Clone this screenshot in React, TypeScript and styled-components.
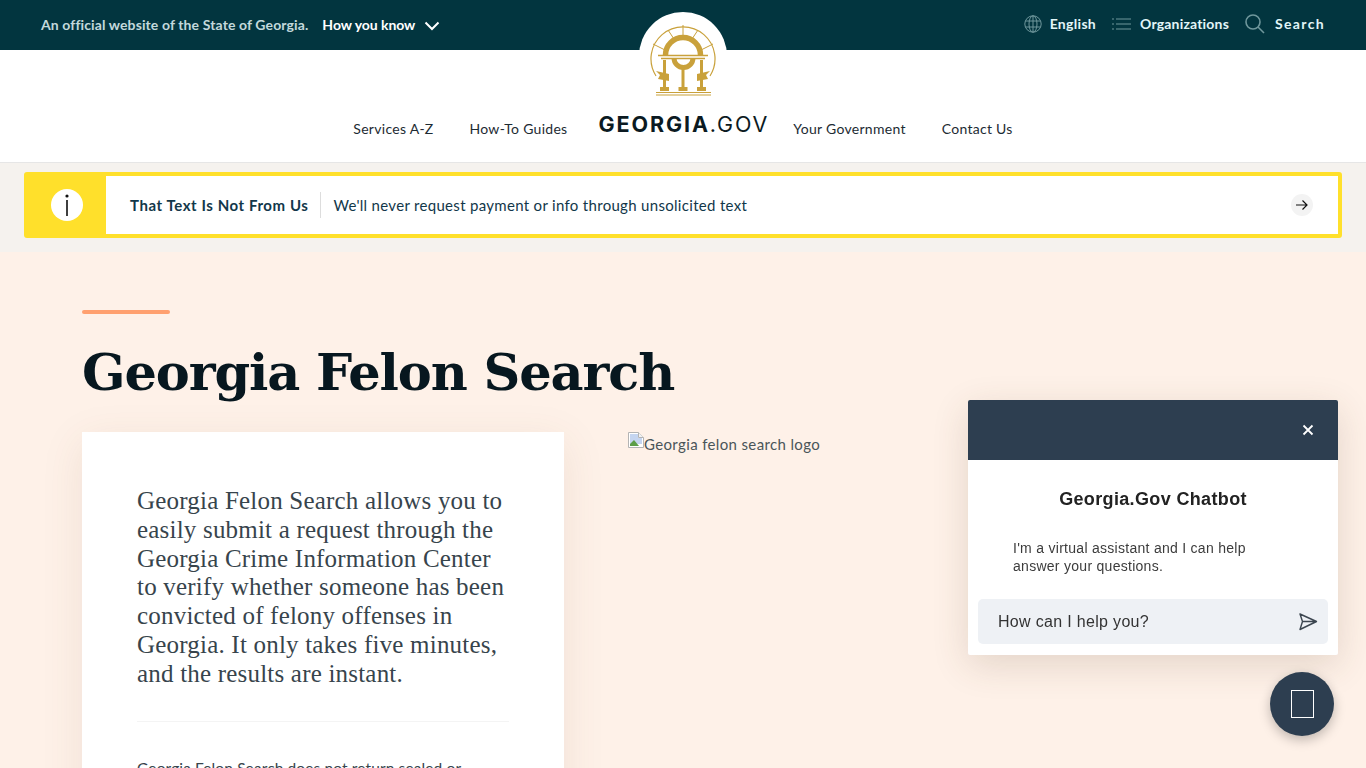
import * as React from 'react';
import styled, { createGlobalStyle } from 'styled-components';

const GlobalStyle = createGlobalStyle`
  html, body {
    margin: 0;
    padding: 0;
    height: 768px;
    overflow: hidden;
    background: #fef1e8;
    font-family: Lato, "Open Sans", sans-serif;
    color: #02353f;
  }
  * { box-sizing: border-box; }
`;

const TopBar = styled.div`
  height: 50px;
  background: #02353f;
  display: flex;
  align-items: center;
  justify-content: space-between;
  padding: 0 41px 1px;
`;

const TopLeft = styled.div`
  display: flex;
  align-items: center;
  gap: 14px;
`;

const Official = styled.span`
  font-size: 14px;
  font-weight: 700;
  letter-spacing: 0.11px;
  color: #c3d9dc;
`;

const HowYouKnow = styled.span`
  display: flex;
  align-items: center;
  gap: 9px;
  font-size: 14px;
  font-weight: 700;
  letter-spacing: -0.05px;
  color: #fff;

  svg {
    margin-top: 3px;
  }
`;

const TopRight = styled.div`
  display: flex;
  align-items: center;
  gap: 16px;
  padding-bottom: 2px;
`;

const TopLink = styled.span<{ $gap: number; $track: number }>`
  display: flex;
  align-items: center;
  gap: ${(p) => p.$gap}px;
  font-size: 14px;
  font-weight: 700;
  color: #e2f6f8;
  letter-spacing: ${(p) => p.$track}px;
`;

const Header = styled.header`
  position: relative;
  height: 113px;
  background: #fff;
  border-bottom: 1px solid #e6e6e6;
  display: flex;
  align-items: flex-start;
  justify-content: center;
  padding-top: 58px;
`;

const Seal = styled.div`
  position: absolute;
  top: -38px;
  left: 639px;
  width: 88px;
  height: 88px;
  padding-top: 12px;
  border-radius: 50%;
  background: #fff;
  display: flex;
  align-items: flex-start;
  justify-content: center;
`;

const NavItem = styled.a`
  font-size: 14px;
  letter-spacing: 0.28px;
  color: #1d2b33;
  line-height: 42px;
  margin: 0 18px;
`;

const Logo = styled.span`
  font-family: Inter, "Open Sans", sans-serif;
  font-size: 21.5px;
  line-height: 32px;
  font-weight: 700;
  letter-spacing: 1.9px;
  color: #0b1a22;
  margin: 0 6px 0 13px;

  small {
    font-size: 21.5px;
    font-weight: 400;
    letter-spacing: 1.9px;
  }
`;

const AlertSection = styled.section`
  height: 89px;
  background: #f5f2ee;
  padding: 9px 24px 0;
`;

const Alert = styled.div`
  height: 66px;
  border: 4px solid #ffe02b;
  border-radius: 3px;
  background: #fff;
  display: flex;
  align-items: center;
`;

const AlertIcon = styled.div`
  width: 78px;
  align-self: stretch;
  background: #ffe02b;
  display: flex;
  align-items: center;
  justify-content: center;
`;

const IconCircle = styled.span`
  width: 32px;
  height: 32px;
  border-radius: 50%;
  background: #fff;
  display: flex;
  align-items: center;
  justify-content: center;
`;

const AlertTitle = styled.strong`
  margin-left: 24px;
  font-size: 15px;
  font-weight: 700;
  color: #12374a;
  letter-spacing: 0.57px;
  padding-right: 12px;
  line-height: 26px;
  border-right: 1px solid #ddd;
`;

const AlertText = styled.span`
  flex: 1;
  margin-left: 12px;
  font-size: 15px;
  color: #12374a;
  letter-spacing: 0.31px;
`;

const ArrowBadge = styled.span`
  width: 22px;
  height: 22px;
  margin-right: 25px;
  border-radius: 50%;
  background: #f3f3f3;
  display: flex;
  align-items: center;
  justify-content: center;
`;

const Main = styled.main`
  background: #fef1e8;
  padding: 58px 82px 0;
`;

const Accent = styled.div`
  width: 88px;
  height: 4px;
  background: #ffa06f;
  border-radius: 2px;
`;

const Title = styled.h1`
  margin: 23px 0 25px;
  font-family: "DejaVu Serif", serif;
  font-size: 51px;
  line-height: 70px;
  font-weight: 700;
  letter-spacing: -1.1px;
  color: #07171f;
`;

const Columns = styled.div`
  display: flex;
  gap: 64px;
  align-items: flex-start;
`;

const Card = styled.article`
  width: 482px;
  background: #fff;
  padding: 55px 55px 40px;
  box-shadow: 0 10px 40px rgba(120, 80, 50, 0.1);
`;

const Lead = styled.p`
  margin: 0;
  font-family: "Liberation Serif", serif;
  font-size: 25px;
  letter-spacing: 0.2px;
  line-height: 28.8px;
  color: #37444c;
`;

const Rule = styled.hr`
  margin: 32px 0 33px;
  border: 0;
  border-top: 1px solid #f4f4f4;
`;

const Body = styled.p`
  margin: 0;
  font-size: 15.5px;
  letter-spacing: 0.12px;
  line-height: 26px;
  color: #37444c;
`;

const Broken = styled.div`
  display: flex;
  align-items: flex-start;
  font-size: 15px;
  letter-spacing: 0.36px;
  line-height: 24px;
  color: #4a5559;
`;

const ChatBox = styled.aside`
  position: fixed;
  top: 400px;
  left: 968px;
  width: 370px;
  height: 255px;
  background: #fff;
  border-radius: 2px;
  box-shadow: 0 10px 36px rgba(90, 60, 40, 0.16);
  font-family: "Liberation Sans", Arial, sans-serif;
  display: flex;
  flex-direction: column;
`;

const ChatHead = styled.div`
  height: 60px;
  background: #2d3e50;
  border-radius: 2px 2px 0 0;
  display: flex;
  align-items: center;
  justify-content: flex-end;
  padding-right: 24px;
`;

const ChatTitle = styled.h2`
  margin: 29px 0 0;
  text-align: center;
  font-size: 18px;
  line-height: 20px;
  font-weight: 700;
  letter-spacing: 0.35px;
  color: #222;
`;

const ChatText = styled.p`
  margin: 30px 0 0 45px;
  width: 270px;
  font-size: 14px;
  letter-spacing: 0.28px;
  line-height: 18px;
  color: #3c3c3c;
`;

const ChatInput = styled.div`
  margin: 24px 10px 0;
  height: 45px;
  border-radius: 5px;
  background: #eef1f5;
  display: flex;
  align-items: center;
  justify-content: space-between;
  padding: 0 10px 0 20px;
  font-size: 16px;
  letter-spacing: 0.32px;
  color: #333;
`;

const Launcher = styled.button`
  position: fixed;
  top: 672px;
  left: 1270px;
  width: 64px;
  height: 64px;
  border: 0;
  border-radius: 50%;
  background: #2d3e50;
  box-shadow: 0 4px 12px rgba(0, 0, 0, 0.25);
  display: flex;
  align-items: center;
  justify-content: center;
`;

const Tofu = styled.span`
  width: 23px;
  height: 28px;
  border: 1px solid #fff;
`;

const SealIcon = () => (
  <svg width="66" height="72" viewBox="650 24 66 72" fill="none">
    <g stroke="#c9a13b">
      <path d="M656 76 A32 32 0 1 1 710 76" strokeWidth="1.2" />
      <path d="M653 44l12 6M668 30l6 9M698 30l-6 9M713 44l-12 6M683 25v10" strokeWidth="1" />
      <path d="M665.5 55 A17.5 17.5 0 0 1 700.5 55" strokeWidth="5.5" />
      <path d="M674 58 A9.5 9.5 0 0 0 693 58" strokeWidth="5" />
      <path d="M658 55.5h50M661 58.5h44" strokeWidth="1.5" />
      <path d="M664.5 60v27M683 65v22M701.5 60v27" strokeWidth="3" />
      <path d="M656 92.5h55M656 95h55" strokeWidth="1.2" />
    </g>
    <g fill="#c9a13b">
      <path d="M656 71l13 3v7l-11-2 2-4zM710 71l-13 3v7l11-2-2-4z" />
      <rect x="660" y="87" width="9" height="4" />
      <rect x="678.5" y="87" width="9" height="4" />
      <rect x="697" y="87" width="9" height="4" />
    </g>
  </svg>
);

const Globe = () => (
  <svg width="18" height="18" viewBox="0 0 18 18" fill="none" stroke="#6f979c" strokeWidth="1">
    <circle cx="9" cy="9" r="8.2" />
    <ellipse cx="9" cy="9" rx="4" ry="8.2" />
    <path d="M9 1v16M1.5 6h15M1.5 12h15" />
  </svg>
);

const ListIcon = () => (
  <svg width="19" height="14" viewBox="0 0 19 14" fill="none" stroke="#6f979c" strokeWidth="1.2">
    <path d="M0 2h2M4 2h15M0 7h2M4 7h15M0 12h2M4 12h15" />
  </svg>
);

const SearchIcon = () => (
  <svg width="20" height="20" viewBox="0 0 20 20" fill="none" stroke="#6f979c" strokeWidth="1.6">
    <circle cx="8" cy="8" r="7" />
    <path d="M13 13l6 6" />
  </svg>
);

const BrokenImage = () => (
  <svg width="16" height="16" viewBox="0 0 16 16">
    <path d="M.5.5h10l5 5v10H.5z" fill="#fff" stroke="#b4b4b4" />
    <path d="M2 2h8v4h4v6H2z" fill="#c5d5f0" />
    <path d="M2 14v-2l4-4 5 6z" fill="#5c9e48" />
    <path d="M10.5.5v5h5" fill="#f2f2f2" stroke="#b4b4b4" />
  </svg>
);

export default function App() {
  return (
    <>
      <GlobalStyle />
      <TopBar>
        <TopLeft>
          <Official>An official website of the State of Georgia.</Official>
          <HowYouKnow>
            How you know
            <svg width="16" height="10" viewBox="0 0 16 10" fill="none" stroke="#fff" strokeWidth="2">
              <path d="M1.5 1.5L8 8l6.5-6.5" />
            </svg>
          </HowYouKnow>
        </TopLeft>
        <TopRight>
          <TopLink $gap={8} $track={0.3}><Globe />English</TopLink>
          <TopLink $gap={9} $track={0.18}><ListIcon />Organizations</TopLink>
          <TopLink $gap={10} $track={1.35}><SearchIcon />Search</TopLink>
        </TopRight>
      </TopBar>
      <Header>
        <Seal><SealIcon /></Seal>
        <NavItem>Services A-Z</NavItem>
        <NavItem>How-To Guides</NavItem>
        <Logo>GEORGIA<small>.GOV</small></Logo>
        <NavItem>Your Government</NavItem>
        <NavItem>Contact Us</NavItem>
      </Header>
      <AlertSection>
        <Alert>
          <AlertIcon>
            <IconCircle>
              <svg width="4" height="22" viewBox="0 0 4 22" fill="#111">
                <circle cx="2" cy="2" r="1.6" />
                <rect x="1.2" y="6" width="1.6" height="16" />
              </svg>
            </IconCircle>
          </AlertIcon>
          <AlertTitle>That Text Is Not From Us</AlertTitle>
          <AlertText>We'll never request payment or info through unsolicited text</AlertText>
          <ArrowBadge>
            <svg width="12" height="12" viewBox="0 0 12 12" fill="none" stroke="#111" strokeWidth="1.2">
              <path d="M0 6h11M6.5 1.5L11 6l-4.5 4.5" />
            </svg>
          </ArrowBadge>
        </Alert>
      </AlertSection>
      <Main>
        <Accent />
        <Title>Georgia Felon Search</Title>
        <Columns>
          <Card>
            <Lead>
              Georgia Felon Search allows you to easily submit a request through the Georgia Crime
              Information Center to verify whether someone has been convicted of felony offenses in
              Georgia. It only takes five minutes, and the results are instant.
            </Lead>
            <Rule />
            <Body>Georgia Felon Search does not return sealed or</Body>
          </Card>
          <Broken><BrokenImage />Georgia felon search logo</Broken>
        </Columns>
      </Main>
      <ChatBox>
        <ChatHead>
          <svg width="12" height="12" viewBox="0 0 12 12" stroke="#fff" strokeWidth="1.8">
            <path d="M1.5 1.5l9 9M10.5 1.5l-9 9" />
          </svg>
        </ChatHead>
        <ChatTitle>Georgia.Gov Chatbot</ChatTitle>
        <ChatText>I'm a virtual assistant and I can help answer your questions.</ChatText>
        <ChatInput>
          How can I help you?
          <svg width="20" height="20" viewBox="0 0 20 20" fill="none" stroke="#3c4650" strokeWidth="1.4" strokeLinejoin="round">
            <path d="M2 2l16.5 7.5L2 17.5l2.5-8zM4.5 9.5h14" />
          </svg>
        </ChatInput>
      </ChatBox>
      <Launcher><Tofu /></Launcher>
    </>
  );
}
